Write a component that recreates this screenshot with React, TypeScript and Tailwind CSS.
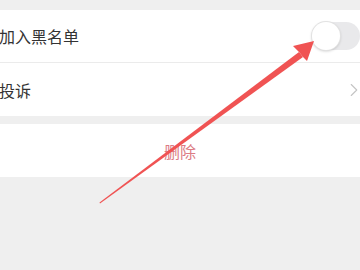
import { ChevronRight } from 'lucide-react'

const FONT = { fontFamily: '"Noto Sans CJK SC", "Noto Sans", sans-serif' }

function Toggle() {
  return (
    <div className="relative h-[28px] w-[48px] shrink-0 rounded-full bg-[#e9e9eb]">
      <span className="absolute left-0 top-0 h-[28px] w-[28px] rounded-full bg-white shadow-[0_1px_3px_rgba(0,0,0,0.25)] ring-1 ring-[#e2e2e2]" />
    </div>
  )
}

export default function App() {
  return (
    <div
      className="relative h-[270px] w-[360px] overflow-hidden bg-[#efefef] pt-[10px]"
      style={FONT}
    >
      {/* Settings group */}
      <div className="bg-white">
        <div className="flex h-[53px] items-center border-b border-[#ebebeb]">
          <span className="-ml-[1px] text-[16px] text-[#333333]">加入黑名单</span>
          <div className="ml-auto">
            <Toggle />
          </div>
        </div>
        <div className="flex h-[53px] items-center">
          <span className="-ml-[1px] text-[16px] text-[#333333]">投诉</span>
          <ChevronRight size={22} strokeWidth={1.2} className="-mr-[5px] ml-auto text-[#c4c4c4]" />
        </div>
      </div>

      {/* Delete */}
      <div className="mt-[8px] flex h-[53px] items-center justify-center bg-white">
        <span className="text-[16px] text-[#dc7c84]">删除</span>
      </div>

      {/* Annotation arrow */}
      <svg
        className="pointer-events-none absolute left-0 top-0"
        width="360"
        height="270"
        viewBox="0 0 360 270"
      >
        <polygon
          points="100,203.5 99.5,202.5 299,52 303,57"
          fill="#f05353"
        />
        <polygon
          points="314,41 293,46 299,52 303,57 307,61"
          fill="#f05353"
        />
      </svg>
    </div>
  )
}
